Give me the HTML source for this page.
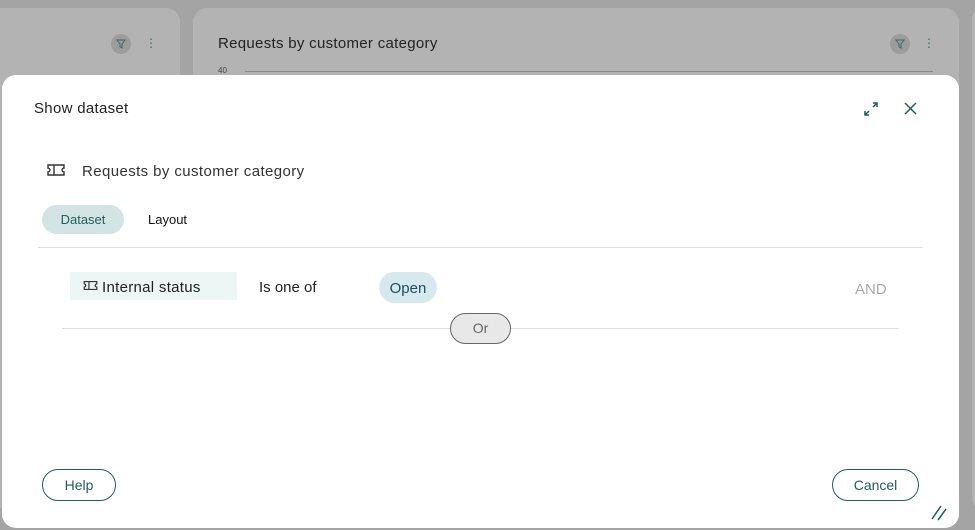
<!DOCTYPE html>
<html><head><style>
*{box-sizing:border-box;margin:0;padding:0}
body{width:975px;height:530px;background:#a4a4a4;font-family:"Liberation Sans",sans-serif;position:relative;overflow:hidden;color:#222}
.card{position:absolute;background:#b3b3b3;border-radius:14px}
.m{position:absolute;left:2px;top:75px;width:957px;height:453px;background:#fff;border-radius:14px}
.a{position:absolute;white-space:nowrap}
.btn{position:absolute;border:1px solid #1f5f5b;border-radius:16px;height:32px;color:#1f5f5b;font-size:14px;display:flex;align-items:center;justify-content:center}
</style></head><body>
<div class="card" style="left:-20px;top:8px;width:200px;height:500px"></div>
<div class="card" style="left:193px;top:8px;width:766px;height:500px"></div>
<div class="card" style="left:972px;top:8px;width:20px;height:500px"></div>
<div class="a" style="left:111px;top:34px;width:20px;height:20px;border-radius:50%;background:#9c9c9c"></div>
<svg class="a" style="left:116px;top:39px" width="10" height="10" viewBox="0 0 10 10" fill="none" stroke="#3a6a6a" stroke-width="1"><path d="M1 1h8L6 5v4L4 8V5z"/></svg>
<div class="a" style="left:145px;top:36px;color:#3a6a6a;font-size:12px">⋮</div>
<div class="a" style="left:218px;top:35px;font-size:15px;color:#222;letter-spacing:0.3px">Requests by customer category</div>
<div class="a" style="left:890px;top:34px;width:20px;height:20px;border-radius:50%;background:#9c9c9c"></div>
<svg class="a" style="left:895px;top:39px" width="10" height="10" viewBox="0 0 10 10" fill="none" stroke="#3a6a6a" stroke-width="1"><path d="M1 1h8L6 5v4L4 8V5z"/></svg>
<div class="a" style="left:923px;top:36px;color:#3a6a6a;font-size:12px">⋮</div>
<div class="a" style="left:218px;top:66px;font-size:8px;color:#444">40</div>
<div class="a" style="left:245px;top:71px;width:688px;height:1px;background:#888"></div>
<div class="m"></div>
<div class="a" style="left:34px;top:100px;font-size:15px;letter-spacing:0.3px">Show dataset</div>
<svg class="a" style="left:862px;top:100px" width="18" height="18" viewBox="0 0 18 18" fill="none" stroke="#1f5f5b" stroke-width="1.5"><path d="M11 7L15 3M11 3h4v4M7 11L3 15M3 11v4h4"/></svg>
<svg class="a" style="left:903px;top:101px" width="15" height="15" viewBox="0 0 15 15" stroke="#1f5f5b" stroke-width="1.5"><path d="M2 2L13 13M13 2L2 13"/></svg>
<svg class="a" style="left:47px;top:163px" width="18" height="14" viewBox="0 0 18 14" fill="none" stroke="#333" stroke-width="1.4"><path d="M1 2h16v3a2 2 0 0 0 0 4v3H1V9a2 2 0 0 0 0-4zM7 2v10"/></svg>
<div class="a" style="left:82px;top:163px;font-size:15px;color:#333;letter-spacing:0.4px">Requests by customer category</div>
<div class="a" style="left:42px;top:205px;width:82px;height:29px;border-radius:15px;background:#d3e4e4;color:#1f5f5b;font-size:13px;text-align:center;line-height:29px">Dataset</div>
<div class="a" style="left:148px;top:212px;font-size:13px;color:#111">Layout</div>
<div class="a" style="left:38px;top:247px;width:885px;height:1px;background:#ddd"></div>
<div class="a" style="left:70px;top:272px;width:167px;height:28px;background:#ebf6f5;border-radius:2px"></div>
<svg class="a" style="left:83px;top:280px" width="15" height="11" viewBox="0 0 18 14" fill="none" stroke="#333" stroke-width="1.5"><path d="M1 2h16v3a2 2 0 0 0 0 4v3H1V9a2 2 0 0 0 0-4zM7 2v10"/></svg>
<div class="a" style="left:102px;top:279px;font-size:15px;color:#222;letter-spacing:0.3px">Internal status</div>
<div class="a" style="left:259px;top:279px;font-size:15px;color:#222">Is one of</div>
<div class="a" style="left:379px;top:272px;width:58px;height:31px;border-radius:16px;background:#d6e9ee;color:#1f4f5b;font-size:15px;text-align:center;line-height:33px">Open</div>
<div class="a" style="left:855px;top:281px;font-size:15px;color:#aaa">AND</div>
<div class="a" style="left:62px;top:328px;width:837px;height:1px;background:#ddd"></div>
<div class="a" style="left:450px;top:313px;width:61px;height:31px;border-radius:16px;background:#e8e8e8;border:1px solid #666;color:#666;font-size:14px;text-align:center;line-height:29px">Or</div>
<div class="btn" style="left:42px;top:469px;width:74px">Help</div>
<div class="btn" style="left:832px;top:469px;width:87px">Cancel</div>
<svg class="a" style="left:929px;top:502px" width="20" height="20" viewBox="0 0 20 20" stroke="#1f5f5b" stroke-width="1.5"><path d="M3 17L12 4M9 18L17 7"/></svg>
</body></html>
